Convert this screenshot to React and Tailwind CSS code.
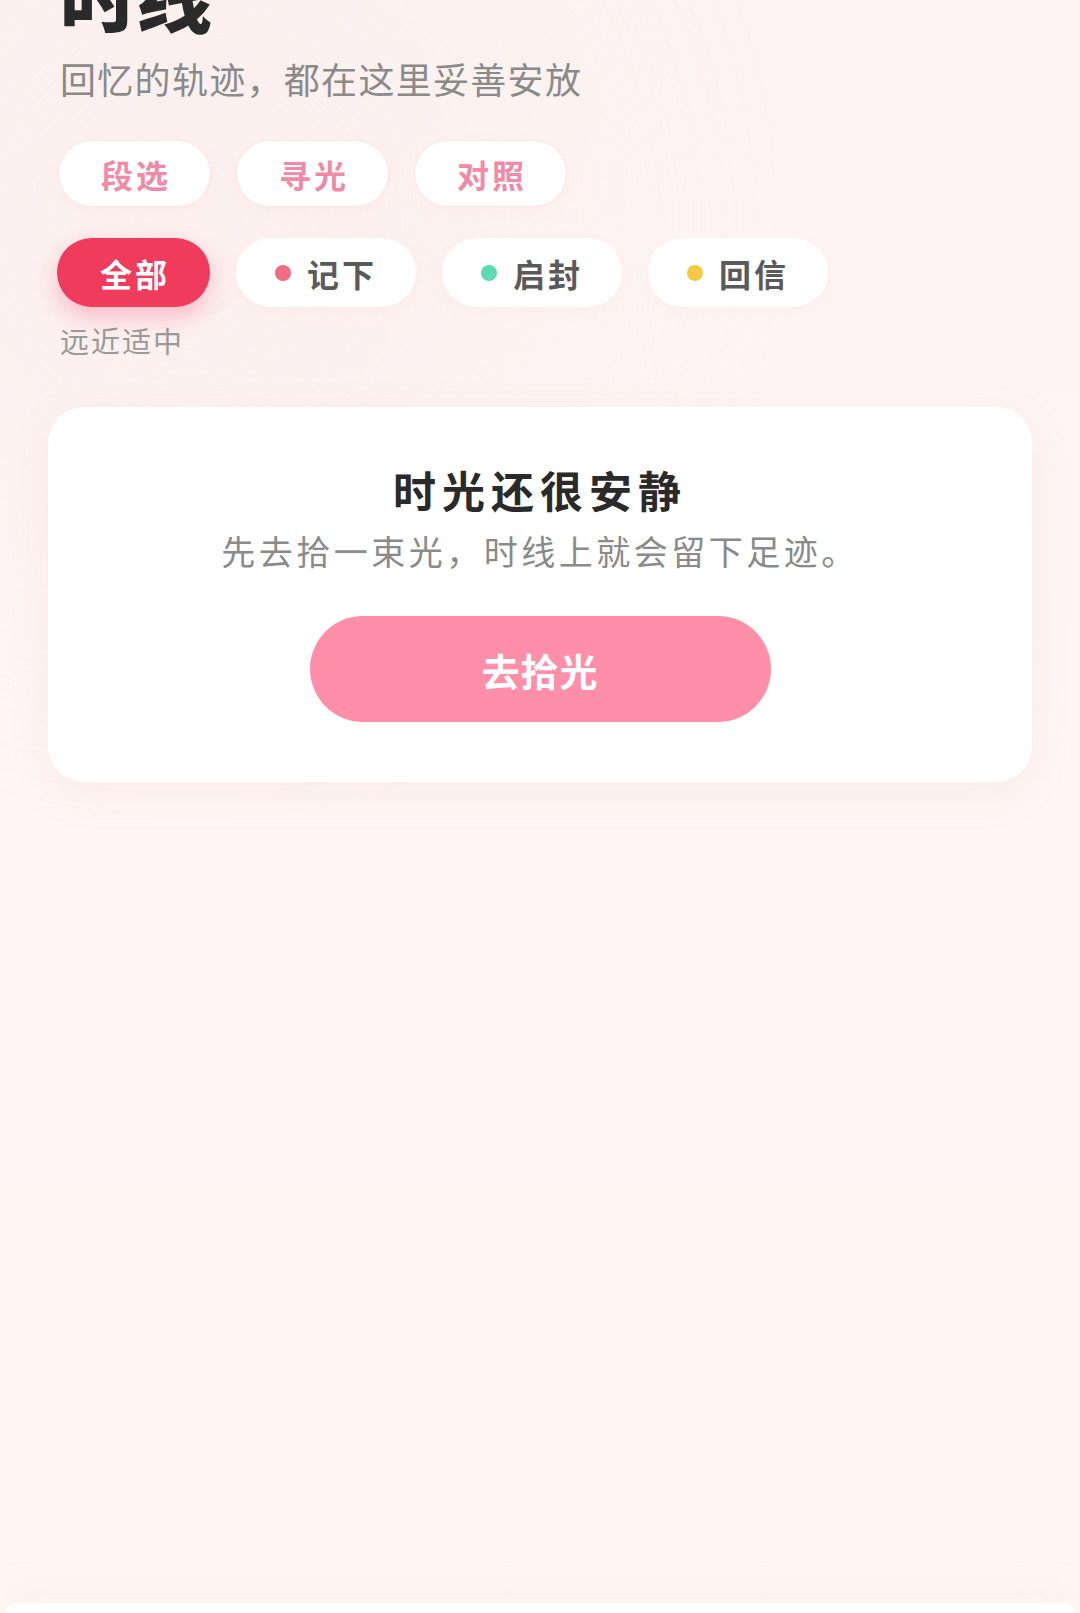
import React, { useState } from 'react';

const FONT = { fontFamily: '"Noto Sans CJK SC", "Noto Sans", sans-serif' };

const sortTabs = ['段选', '寻光', '对照'];

const typeTabs = [
  { key: 'all', label: '全部' },
  { key: 'note', label: '记下', dot: 'bg-[#f26b82]' },
  { key: 'open', label: '启封', dot: 'bg-[#5fd9b2]' },
  { key: 'reply', label: '回信', dot: 'bg-[#f6c945]' },
];

const App = () => {
  const [active, setActive] = useState('all');

  return (
    <div
      className="relative h-[1613px] w-full overflow-hidden bg-gradient-to-b from-[#fcf4f2] via-[#fdf7f5] to-[#fef8f5]"
      style={FONT}
    >
      {/* soft glows */}
      <div className="pointer-events-none absolute -left-40 top-[-120px] h-[700px] w-[700px] rounded-full bg-[#fbeaea] opacity-40 blur-[120px]" />

      <div className="relative px-[60px]">
        <h1 className="-mt-[44px] text-[76px] font-black leading-none text-[#2a2a2a]">时线</h1>
        <p className="mt-[21px] text-[36px] leading-[50px] tracking-[1.3px] text-[#8a8a8a]">
          回忆的轨迹，都在这里妥善安放
        </p>

        {/* sort tabs */}
        <div className="mt-[37px] flex gap-[25px] -ml-[2px]">
          {sortTabs.map(t => (
            <button
              key={t}
              className="flex h-[67px] items-center rounded-full border border-[#fbe6e8] bg-white pl-[42px] pr-[39px] text-[32px] font-bold tracking-[3px] text-[#f08aa6] shadow-[0_4px_14px_rgba(240,160,170,0.08)]"
            >
              {t}
            </button>
          ))}
        </div>

        {/* type tabs */}
        <div className="mt-[31px] flex gap-[26px] -ml-[3px]">
          {typeTabs.map(t =>
            active === t.key ? (
              <button
                key={t.key}
                onClick={() => setActive(t.key)}
                className="flex h-[69px] items-center rounded-full bg-[#f03c5c] pl-[43px] pr-[40px] text-[32px] font-bold tracking-[3px] text-white shadow-[0_10px_24px_rgba(240,60,92,0.3)]"
              >
                {t.label}
              </button>
            ) : (
              <button
                key={t.key}
                onClick={() => setActive(t.key)}
                className="flex h-[69px] items-center gap-[16px] rounded-full bg-white pl-[39px] pr-[39px] text-[32px] font-semibold tracking-[3px] text-[#5a5a5a] shadow-[0_4px_14px_rgba(240,160,170,0.08)]"
              >
                {t.dot && <span className={`h-[16px] w-[16px] rounded-full ${t.dot}`} />}
                {t.label}
              </button>
            )
          )}
        </div>

        <p className="mt-[13px] text-[29px] leading-[40px] tracking-[2px] text-[#9a9a9a]">远近适中</p>
      </div>

      {/* empty state */}
      <div className="relative mx-[48px] mt-[47px] flex flex-col items-center rounded-[36px] bg-white pb-[60px] pt-[57px] shadow-[0_12px_40px_rgba(240,150,160,0.12)]">
        <h2 className="text-[43px] font-bold leading-[50px] tracking-[6px] text-[#2a2a2a]">时光还很安静</h2>
        <p className="mt-[13px] text-[34px] leading-[48px] tracking-[3.5px] text-[#8a8a8a]">
          先去拾一束光，时线上就会留下足迹。
        </p>
        <button className="mt-[41px] flex h-[106px] w-[461px] items-center justify-center rounded-full bg-[#ff8fa9] text-[38px] font-bold tracking-[1px] text-white">
          去拾光
        </button>
      </div>

      {/* tab bar peeking in */}
      <div className="absolute bottom-0 left-[5px] right-[5px] h-[10px] rounded-t-[30px] bg-white shadow-[0_-10px_30px_rgba(230,180,170,0.25)]" />
    </div>
  );
};

export default App;
